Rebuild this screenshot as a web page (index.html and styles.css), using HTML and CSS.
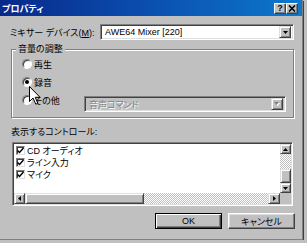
FILE: index.html
```html
<!DOCTYPE html>
<html lang="ja">
<head>
    <meta charset="UTF-8">
    <title>プロパティ</title>
    <link rel="stylesheet" href="styles.css">
</head>
<body>
<div class="window">
    <div class="titlebar">
        <span class="title">プロパティ</span>
        <div class="title-buttons">
            <span class="tbtn">?</span>
            <span class="tbtn">
                <svg width="8" height="7" viewBox="0 0 8 7"><path d="M1 0.5 L7 6.5 M7 0.5 L1 6.5" stroke="#000" stroke-width="1.6"/></svg>
            </span>
        </div>
    </div>

    <div class="content">
        <div class="device-row">
            <span class="device-label">ミキサー デバイス(<u>M</u>):</span>
            <div class="combo device-combo">
                <span class="combo-text">AWE64 Mixer [220]</span>
                <span class="drop-btn">
                    <svg width="5" height="3" viewBox="0 0 5 3"><path d="M0 0 H5 L2.5 3 Z" fill="#000"/></svg>
                </span>
            </div>
        </div>

        <fieldset class="group">
            <legend>音量の調整</legend>
            <div class="radio-row"><span class="radio"></span>再生</div>
            <div class="radio-row"><span class="radio checked"></span>録音</div>
            <div class="radio-row">
                <span class="radio"></span>その他
                <div class="combo disabled">
                    <span class="combo-text">音声コマンド</span>
                    <span class="drop-btn">
                        <svg width="6" height="4" viewBox="0 0 6 4"><path d="M1 1 H6 L3.5 4 Z" fill="#fff"/><path d="M0 0 H5 L2.5 3 Z" fill="#808080"/></svg>
                    </span>
                </div>
            </div>
        </fieldset>

        <div class="list-label">表示するコントロール:</div>

        <div class="listbox">
            <div class="items">
                <div class="item"><span class="check"><svg width="7" height="7" viewBox="0 0 7 7"><path d="M0.5 3.5 L2.5 5.5 L6.5 1" stroke="#000" stroke-width="1.5" fill="none"/></svg></span>CD オーディオ</div>
                <div class="item"><span class="check"><svg width="7" height="7" viewBox="0 0 7 7"><path d="M0.5 3.5 L2.5 5.5 L6.5 1" stroke="#000" stroke-width="1.5" fill="none"/></svg></span>ライン入力</div>
                <div class="item"><span class="check"><svg width="7" height="7" viewBox="0 0 7 7"><path d="M0.5 3.5 L2.5 5.5 L6.5 1" stroke="#000" stroke-width="1.5" fill="none"/></svg></span>マイク</div>
            </div>
            <div class="vscroll">
                <span class="sbtn"><svg width="5" height="3" viewBox="0 0 5 3"><path d="M0 3 H5 L2.5 0 Z" fill="#000"/></svg></span>
                <span class="track"></span>
                <span class="thumb"></span>
                <span class="sbtn"><svg width="5" height="3" viewBox="0 0 5 3"><path d="M0 0 H5 L2.5 3 Z" fill="#000"/></svg></span>
            </div>
            <div class="hscroll">
                <span class="sbtn"><svg width="3" height="5" viewBox="0 0 3 5"><path d="M3 0 V5 L0 2.5 Z" fill="#000"/></svg></span>
                <span class="thumb hthumb"></span>
                <span class="track"></span>
                <span class="sbtn right"><svg width="3" height="5" viewBox="0 0 3 5"><path d="M0 0 V5 L3 2.5 Z" fill="#000"/></svg></span>
            </div>
            <div class="corner"></div>
        </div>

        <div class="buttons">
            <button class="btn default">OK</button>
            <button class="btn">キャンセル</button>
        </div>
    </div>

    <!-- mouse pointer over the radio buttons -->
    <svg class="cursor" width="12" height="19" viewBox="0 0 12 19">
        <path d="M0.5 0.5 V15.5 L4 12 L6.8 18.2 L8.8 17.3 L6.2 11.3 H11 Z" fill="#fff" stroke="#000" stroke-width="1"/>
    </svg>
</div>
</body>
</html>
```

FILE: styles.css
```css
*{
    box-sizing: border-box;
}
body{
    margin: 0;
    background: #c0c0c0;
    font-family: "Liberation Sans", "Noto Sans CJK JP", sans-serif;
    font-size: 9px;
    font-feature-settings: "palt";
    color: #000;
}
.window{
    position: relative;
    width: 303px;
    height: 240px;
    background: #c0c0c0;
    border-right: 1px solid #808080;
    border-bottom: 1px solid #808080;
    box-shadow: 1px 1px 0 #404040;
}
.titlebar{
    height: 16px;
    display: flex;
    align-items: center;
    justify-content: space-between;
    padding: 0 4px 0 2px;
    background: linear-gradient(90deg, #08288a 0%, #0a4cac 45%, #0c78cc 100%);
    color: #fff;
    font-weight: bold;
    font-family: "Noto Sans CJK JP", sans-serif;
}
.title-buttons{
    display: flex;
}
.tbtn{
    width: 12px;
    height: 11px;
    display: flex;
    align-items: center;
    justify-content: center;
    background: #c0c0c0;
    border: 1px solid;
    border-color: #fff #404040 #404040 #fff;
    box-shadow: inset -1px -1px 0 #808080;
    color: #000;
    font-family: "Liberation Sans", sans-serif;
    font-size: 9px;
    line-height: 1;
}
.content{
    padding: 8px 8px 0 11px;
}
.device-row{
    display: flex;
    align-items: center;
    height: 16px;
}
.device-label{
    margin-left: -1px;
}
.combo{
    height: 16px;
    display: flex;
    align-items: center;
    padding: 2px 2px 2px 4px;
    background: #fff;
    border: 1px solid;
    border-color: #808080 #fff #fff #808080;
    box-shadow: inset 1px 1px 0 #404040, inset -1px -1px 0 #dfdfdf;
}
.device-combo{
    width: 194px;
    margin-left: auto;
}
.drop-btn, .sbtn{
    display: flex;
    align-items: center;
    justify-content: center;
    background: #c0c0c0;
    border: 1px solid;
    border-color: #dfdfdf #404040 #404040 #dfdfdf;
    box-shadow: inset 1px 1px 0 #fff, inset -1px -1px 0 #808080;
}
.drop-btn{
    margin-left: auto;
    width: 12px;
    height: 12px;
}
.group{
    margin: 3px 0 0;
    padding: 0 7px 8px 0;
    min-width: 0;
    border: 1px solid #808080;
    box-shadow: inset 1px 1px 0 #fff, 1px 1px 0 #fff;
}
.group legend{
    margin-left: 4px;
    padding: 0 2px;
    line-height: 12px;
    background: #c0c0c0;
}
.radio-row{
    display: flex;
    align-items: center;
    gap: 2px;
    height: 18px;
    padding-left: 10px;
}
.radio{
    position: relative;
    width: 10px;
    height: 10px;
    border-radius: 50%;
    background: #fff;
    border: 1px solid;
    border-color: #808080 #fff #fff #808080;
    box-shadow: inset 1px 1px 0 #404040;
}
.radio.checked::after{
    content: "";
    position: absolute;
    left: 2px;
    top: 2px;
    width: 4px;
    height: 4px;
    border-radius: 50%;
    background: #000;
}
.combo.disabled{
    width: 202px;
    margin-left: auto;
    align-self: flex-start;
    margin-top: 5px;
    background: #c0c0c0;
    color: #808080;
    text-shadow: 1px 1px 0 #fff;
}
.list-label{
    margin-top: 8px;
    line-height: 12px;
}
.listbox{
    margin: 4px 0 0 1px;
    width: 281px;
    height: 64px;
    padding: 1px;
    display: grid;
    grid-template-columns: 1fr 11px;
    grid-template-rows: 1fr 11px;
    border: 1px solid;
    border-color: #808080 #fff #fff #808080;
    box-shadow: inset 1px 1px 0 #404040, inset -1px -1px 0 #dfdfdf;
    background: #c0c0c0;
}
.items{
    background: #fff;
    padding-left: 2px;
}
.item{
    display: flex;
    align-items: center;
    gap: 2px;
    height: 12px;
}
.check{
    width: 9px;
    height: 9px;
    display: flex;
    align-items: center;
    justify-content: center;
    background: #fff;
    border: 1px solid;
    border-color: #808080 #dfdfdf #dfdfdf #808080;
    box-shadow: inset 1px 1px 0 #404040;
}
.vscroll{
    display: flex;
    flex-direction: column;
}
.vscroll .sbtn{
    height: 10px;
}
.vscroll .track{
    height: 15px;
}
.vscroll .thumb{
    height: 14px;
}
.hscroll{
    display: flex;
}
.hscroll .sbtn{
    width: 11px;
}
.hscroll .sbtn.right{
    width: 12px;
}
.hthumb{
    width: 119px;
}
.hscroll .track{
    flex: 1;
}
.track{
    background: repeating-conic-gradient(#fff 0 25%, #c0c0c0 0 50%) 0 0 / 2px 2px;
}
.thumb{
    background: #c0c0c0;
    border: 1px solid;
    border-color: #dfdfdf #404040 #404040 #dfdfdf;
    box-shadow: inset 1px 1px 0 #fff, inset -1px -1px 0 #808080;
}
.corner{
    background: #c0c0c0;
}
.buttons{
    display: flex;
    justify-content: flex-end;
    gap: 6px;
    margin-top: 7px;
    margin-right: -1px;
}
.btn{
    width: 67px;
    height: 16px;
    padding: 0;
    font-family: inherit;
    font-size: 9px;
    font-feature-settings: "palt";
    color: #000;
    background: #c0c0c0;
    border: 1px solid;
    border-color: #fff #404040 #404040 #fff;
    box-shadow: inset -1px -1px 0 #808080, inset 1px 1px 0 #dfdfdf;
}
.btn.default{
    border-color: #000;
    box-shadow: inset 1px 1px 0 #fff, inset -1px -1px 0 #404040, inset -2px -2px 0 #808080;
}
.cursor{
    position: absolute;
    left: 29px;
    top: 86px;
}
```
